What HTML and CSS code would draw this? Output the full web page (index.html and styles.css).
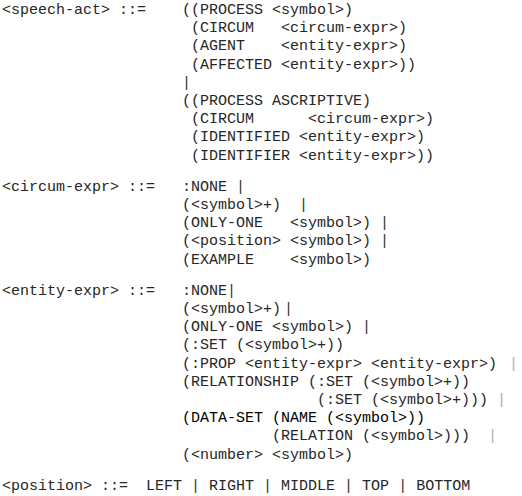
FILE: index.html
```html
<!DOCTYPE html>
<html lang="en">
<head>
<meta charset="utf-8">
<title>Grammar</title>
<link rel="stylesheet" href="styles.css">
</head>
<body>
<main class="grammar">
  <section class="rule">
    <div class="lhs">&lt;speech-act&gt; ::=</div>
    <pre class="rhs">((PROCESS &lt;symbol&gt;)
 (CIRCUM   &lt;circum-expr&gt;)
 (AGENT    &lt;entity-expr&gt;)
 (AFFECTED &lt;entity-expr&gt;))
<span class="bar">|</span>
((PROCESS ASCRIPTIVE)
 (CIRCUM      &lt;circum-expr&gt;)
 (IDENTIFIED &lt;entity-expr&gt;)
 (IDENTIFIER &lt;entity-expr&gt;))</pre>
  </section>
  <section class="rule">
    <div class="lhs">&lt;circum-expr&gt; ::=</div>
    <pre class="rhs">:NONE <span class="bar">|</span>
(&lt;symbol&gt;+)  <span class="bar">|</span>
(ONLY-ONE   &lt;symbol&gt;) <span class="bar">|</span>
(&lt;position&gt; &lt;symbol&gt;) <span class="bar">|</span>
(EXAMPLE    &lt;symbol&gt;)</pre>
  </section>
  <section class="rule">
    <div class="lhs">&lt;entity-expr&gt; ::=</div>
    <pre class="rhs">:NONE<span class="bar">|</span>
(&lt;symbol&gt;+)<span class="bar nudge">|</span>
(ONLY-ONE &lt;symbol&gt;) <span class="bar">|</span>
(:SET (&lt;symbol&gt;+))
(:PROP &lt;entity-expr&gt; &lt;entity-expr&gt;) <span class="bar faint nudge">|</span>
(RELATIONSHIP (:SET (&lt;symbol&gt;+))
               (:SET (&lt;symbol&gt;+))) <span class="bar faint">|</span>
<span class="dark">(DATA-SET (NAME (&lt;symbol&gt;))</span>
          (RELATION (&lt;symbol&gt;)))  <span class="bar faint">|</span>
(&lt;number&gt; &lt;symbol&gt;)</pre>
  </section>
  <p class="inline-rule">&lt;position&gt; ::=  LEFT <span class="bar">|</span> RIGHT <span class="bar">|</span> MIDDLE <span class="bar">|</span> TOP <span class="bar">|</span> BOTTOM</p>
</main>
</body>
</html>
```
FILE: styles.css
```css
html, body {
  margin: 0;
  padding: 0;
  background: #ffffff;
}

body {
  font-family: "Liberation Mono", "Courier New", monospace;
  font-size: 15px;
  line-height: 18.2px;
  color: #262626;
}

.grammar {
  display: flex;
  flex-direction: column;
  gap: 13px;
  padding: 2px 0 0 2px;
}

.rule {
  display: grid;
  grid-template-columns: 180px auto;
}

.lhs,
.rhs,
.inline-rule {
  margin: 0;
  white-space: pre;
  font: inherit;
}

.bar {
  color: #333;
}

.bar.faint {
  color: #b0b0b0;
}

.bar.nudge {
  margin-left: 3px;
}

.dark {
  color: #000;
}
```
